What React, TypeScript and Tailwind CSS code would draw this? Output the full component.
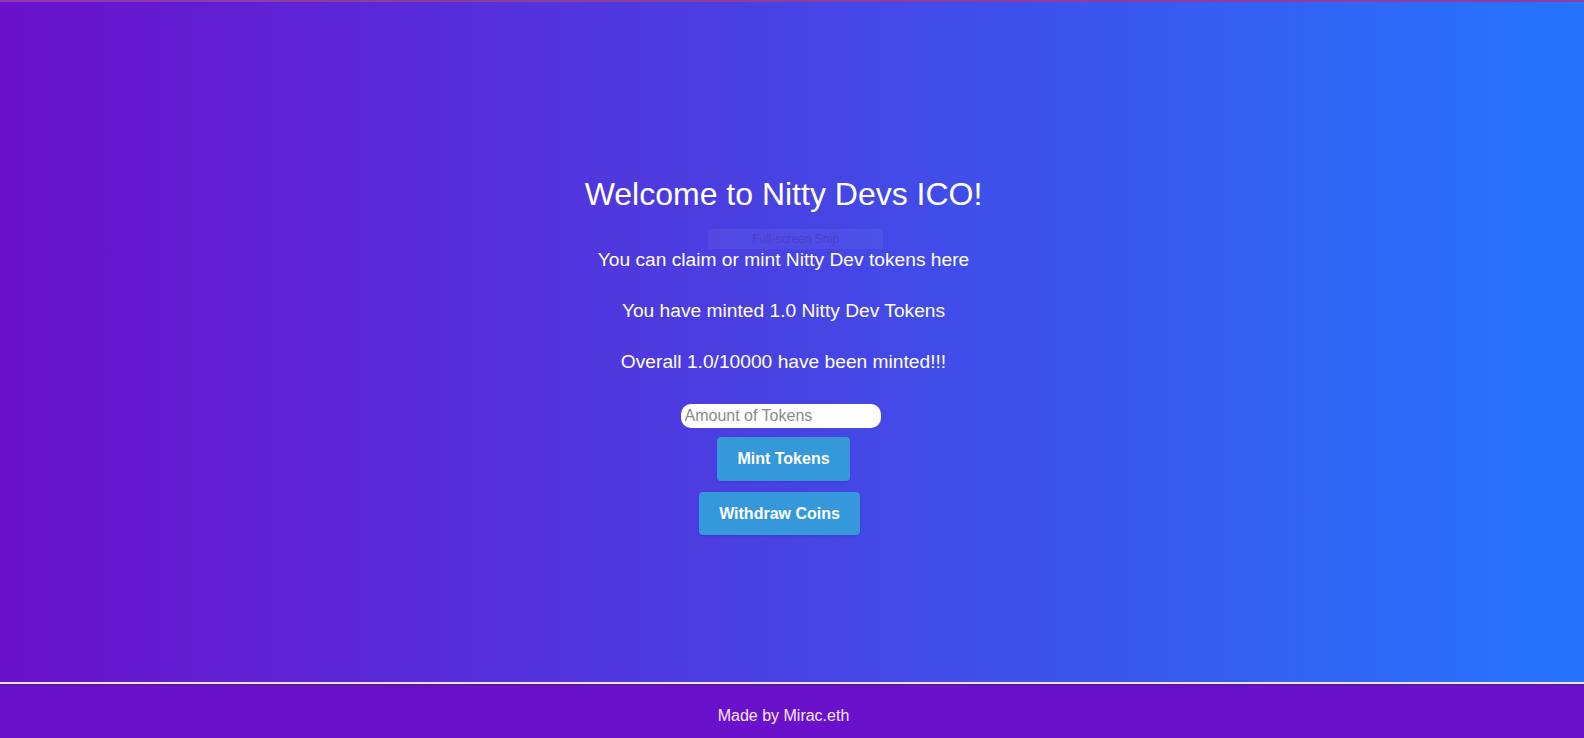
export default function App() {
  return (
    <div className="flex h-[738px] w-full flex-col overflow-hidden font-['Liberation_Sans',Arial,sans-serif] text-white">
      <main className="flex h-[682px] flex-col items-center border-t-2 border-[#8e3ba6] bg-[linear-gradient(to_right,#6a11cb,#2575fc)] pr-[17px] pt-[174px]">
        <h1 className="text-[32px] leading-[37px]">Welcome to Nitty Devs ICO!</h1>

        <div className="ml-[24px] mt-[16px] flex h-[20px] w-[175px] items-center justify-center bg-white/5 text-[12px] text-[#4a3fcf]">
          Full-screen Snip
        </div>

        <p className="mt-0 text-[19.2px] leading-[22px]">You can claim or mint Nitty Dev tokens here</p>
        <p className="mt-[29px] text-[19.2px] leading-[22px]">You have minted 1.0 Nitty Dev Tokens</p>
        <p className="mt-[29px] text-[19.2px] leading-[22px]">Overall 1.0/10000 have been minted!!!</p>

        <input
          type="number"
          placeholder="Amount of Tokens"
          className="mr-[6px] mt-[31px] h-[24px] w-[200px] rounded-[10px] bg-white px-[4px] text-[16px] text-black placeholder:text-[#8a8a8a] focus:outline-none"
        />
        <button className="mt-[9px] h-[44px] rounded-[4px] bg-[#3498db] px-[20px] text-[16px] font-bold shadow-sm">
          Mint Tokens
        </button>
        <button className="mr-[8px] mt-[11px] h-[43px] rounded-[4px] bg-[#3498db] px-[20px] text-[16px] font-bold shadow-sm">
          Withdraw Coins
        </button>
      </main>
      <footer className="flex h-[56px] flex-col border-t-2 border-[#f3dcf0] bg-[#6a11cb] text-[16px] text-[#f6e8ff]">
        <div className="h-[3px] bg-gradient-to-b from-[#52188f] to-[#6a11cb]" />
        <p className="mt-[17px] pr-[17px] text-center">Made by Mirac.eth</p>
      </footer>
    </div>
  );
}
